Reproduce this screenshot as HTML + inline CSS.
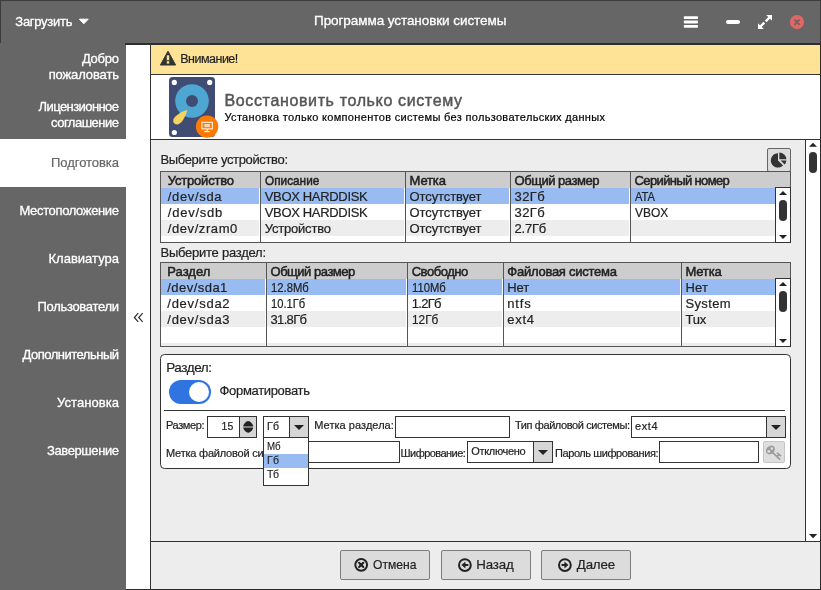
<!DOCTYPE html>
<html lang="ru">
<head>
<meta charset="utf-8">
<title>Программа установки системы</title>
<style>
*{box-sizing:border-box;margin:0;padding:0}
html,body{width:821px;height:590px;overflow:hidden;background:#fff}
body{position:relative;font-family:"Liberation Sans",sans-serif;font-size:13px;color:#222}
.a{position:absolute}
.t{position:absolute;white-space:pre;display:block}
.L{position:absolute;left:0;top:0;width:821px;height:590px;will-change:transform}
.dk{background:#333}
.inp{position:absolute;background:#fff;border:1px solid #333}
.cbtn{position:absolute;background:#d6d6d6;border-left:1px solid #333}
.btn{position:absolute;background:#dcdcdc;border:1px solid #7d7d7d;border-radius:2px}
svg{position:absolute;display:block;overflow:visible}
</style>
</head>
<body>
<!-- title bar -->
<div class="a" style="left:0;top:0;width:821px;height:43px;background:#666;border-top:1px solid #3c3c3c;border-left:1px solid #3c3c3c;border-right:1px solid #3c3c3c"></div>
<!-- sidebar -->
<div class="a" style="left:0;top:43px;width:126px;height:547px;background:#666"></div>
<div class="a" style="left:0;top:139px;width:126px;height:48px;background:#fff"></div>
<!-- frame lines -->
<div class="a dk" style="left:125px;top:43px;width:696px;height:2px;background:#2e2e2e"></div>
<div class="a dk" style="left:150px;top:44px;width:1px;height:546px"></div>
<div class="a dk" style="left:820px;top:44px;width:1px;height:546px;background:#2b2b2b"></div>
<div class="a dk" style="left:126px;top:589px;width:695px;height:1px;background:#2b2b2b"></div>
<!-- warning banner -->
<div class="a" style="left:151px;top:45px;width:669px;height:29px;background:#fee397"></div>
<div class="a dk" style="left:151px;top:74px;width:669px;height:1px"></div>
<svg style="left:160px;top:50px" width="16" height="16" viewBox="0 0 16 16"><path d="M8 1.2 L15.6 15 H0.4 Z" fill="#333" stroke="#333" stroke-width="1" stroke-linejoin="round"/><rect x="6.8" y="5.3" width="2.4" height="5" fill="#fee397"/><rect x="6.8" y="11.3" width="2.4" height="2.3" fill="#fee397"/></svg>
<!-- header -->
<div class="a" style="left:151px;top:75px;width:669px;height:64px;background:#fff"></div>
<div class="a dk" style="left:151px;top:139px;width:669px;height:1px"></div>
<svg style="left:164px;top:74px" width="60" height="66" viewBox="0 0 60 66">
<rect x="5" y="3" width="46" height="60" rx="3.5" fill="#414c74"/>
<circle cx="28" cy="27" r="16.8" fill="#4ea6d3"/>
<circle cx="28" cy="27" r="6" fill="#414c74"/>
<circle cx="10.3" cy="8.4" r="2.6" fill="#fff"/><circle cx="45.7" cy="8.4" r="2.6" fill="#fff"/><circle cx="10.3" cy="58.5" r="2.6" fill="#fff"/>
<path d="M23.4 36 C19.5 36.8 12 40.6 9.7 44.8 C8.2 47.8 10.2 50.8 13.6 50.4 C17.8 49.8 21.8 42 23.4 36 Z" fill="#f5d361"/>
<circle cx="43.1" cy="52.6" r="11.2" fill="#ff7a00"/>
<rect x="37.9" y="48.3" width="10.4" height="6.6" fill="none" stroke="#fff" stroke-width="1"/>
<rect x="40.3" y="50" width="5.6" height="3.2" fill="#ffd9b0"/>
<rect x="42.6" y="55" width="1" height="2" fill="#fff"/><rect x="40.3" y="57" width="5.6" height="1.1" fill="#fff"/>
</svg>
<!-- main scroll area -->
<div class="a" style="left:151px;top:140px;width:654px;height:401px;background:#ededed"></div>
<div class="a dk" style="left:805px;top:140px;width:1px;height:401px"></div>
<div class="a" style="left:806px;top:140px;width:14px;height:401px;background:#fff"></div>
<svg style="left:806px;top:140px" width="14" height="401" viewBox="0 0 14 401"><path d="M3 6.8 L7 2.8 L11 6.8 Z" fill="#222"/><rect x="3" y="12" width="8" height="21" rx="4" fill="#333"/><path d="M3 394.1 L11.2 394.1 L7.1 398.2 Z" fill="#222"/></svg>
<div class="a dk" style="left:151px;top:541px;width:669px;height:1px"></div>
<div class="a" style="left:151px;top:542px;width:669px;height:47px;background:#ededed"></div>
<!-- pie button -->
<div class="a" style="left:767px;top:148px;width:24px;height:24px;background:#dcdcdc;border:1px solid #666;border-radius:2px"></div>
<svg style="left:770px;top:151px" width="18" height="18" viewBox="0 0 18 18"><path d="M8 2.2 A7.2 7.2 0 1 0 13.1 14.5 L8 9.4 Z" fill="#333"/><path d="M9.3 1.4 A7.2 7.2 0 0 1 16.4 8.3 L9.3 8.3 Z" fill="#333"/><path d="M10.6 9.6 L16.4 9.6 A7.2 7.2 0 0 1 14.6 13.6 Z" fill="#333"/></svg>
<!-- table 1 -->
<div class="a" style="left:160px;top:171px;width:631px;height:72px;background:#fff;border:1px solid #555"></div>
<div class="a" style="left:161px;top:172px;width:629px;height:16px;background:#cdcdcd"></div>
<div class="a" style="left:161px;top:188px;width:614px;height:16px;background:#98bbf1"></div>
<div class="a" style="left:161px;top:220px;width:614px;height:16px;background:#ededed"></div>
<div class="a" style="left:259px;top:188px;width:1px;height:54px;background:#fff"></div><div class="a" style="left:404px;top:188px;width:1px;height:54px;background:#fff"></div><div class="a" style="left:509px;top:188px;width:1px;height:54px;background:#fff"></div><div class="a" style="left:629px;top:188px;width:1px;height:54px;background:#fff"></div>
<div class="a" style="left:260px;top:172px;width:1px;height:70px;background:#555"></div>
<div class="a" style="left:405px;top:172px;width:1px;height:70px;background:#555"></div>
<div class="a" style="left:510px;top:172px;width:1px;height:70px;background:#555"></div>
<div class="a" style="left:630px;top:172px;width:1px;height:70px;background:#555"></div>
<div class="a" style="left:775px;top:187px;width:16px;height:56px;background:#fff;border:1px solid #333"></div>
<svg style="left:776px;top:188px" width="14" height="54" viewBox="0 0 14 54"><path d="M3 7 L7 3 L11 7 Z" fill="#222"/><rect x="3" y="12" width="8" height="21" rx="4" fill="#333"/><path d="M3 47 L11 47 L7 51 Z" fill="#222"/></svg>
<!-- table 2 -->
<div class="a" style="left:160px;top:262px;width:631px;height:85px;background:#fff;border:1px solid #555"></div>
<div class="a" style="left:161px;top:263px;width:629px;height:16px;background:#cdcdcd"></div>
<div class="a" style="left:161px;top:279px;width:614px;height:16px;background:#98bbf1"></div>
<div class="a" style="left:161px;top:311px;width:614px;height:16px;background:#ededed"></div>
<div class="a" style="left:161px;top:343px;width:614px;height:3px;background:#ededed"></div>
<div class="a" style="left:265px;top:279px;width:1px;height:67px;background:#fff"></div><div class="a" style="left:406px;top:279px;width:1px;height:67px;background:#fff"></div><div class="a" style="left:502px;top:279px;width:1px;height:67px;background:#fff"></div><div class="a" style="left:680px;top:279px;width:1px;height:67px;background:#fff"></div>
<div class="a" style="left:266px;top:263px;width:1px;height:83px;background:#555"></div>
<div class="a" style="left:407px;top:263px;width:1px;height:83px;background:#555"></div>
<div class="a" style="left:503px;top:263px;width:1px;height:83px;background:#555"></div>
<div class="a" style="left:681px;top:263px;width:1px;height:83px;background:#555"></div>
<div class="a" style="left:775px;top:278px;width:16px;height:69px;background:#fff;border:1px solid #333"></div>
<svg style="left:776px;top:279px" width="14" height="67" viewBox="0 0 14 67"><path d="M3 7 L7 3 L11 7 Z" fill="#222"/><rect x="3" y="12" width="8" height="21" rx="4" fill="#333"/><path d="M3 60 L11 60 L7 64 Z" fill="#222"/></svg>
<!-- group box -->
<div class="a" style="left:160px;top:354px;width:631px;height:115px;background:#fff;border:1px solid #333;border-radius:4.5px"></div>
<div class="a" style="left:169px;top:380px;width:42px;height:24px;background:#2f74e0;border-radius:12px"></div>
<div class="a" style="left:189px;top:382px;width:20px;height:20px;background:#fff;border-radius:10px"></div>
<div class="a dk" style="left:164px;top:410px;width:621px;height:1px"></div>
<!-- row 1 controls -->
<div class="inp" style="left:207px;top:416px;width:50px;height:22px"></div>
<div class="cbtn" style="left:239px;top:417px;width:17px;height:20px"></div>
<svg style="left:240px;top:417px" width="16" height="20" viewBox="0 0 16 20"><path d="M3.2 9.4 C3.4 7.2 6 4.3 8.2 4.1 C10.4 4.3 13 7.2 13.2 9.4 Z" fill="#222"/><path d="M3.2 10.5 C3.4 12.7 6 15.6 8.2 15.8 C10.4 15.6 13 12.7 13.2 10.5 Z" fill="#222"/></svg>
<div class="inp" style="left:263px;top:416px;width:46px;height:22px"></div>
<div class="cbtn" style="left:289px;top:417px;width:19px;height:20px"></div>
<svg style="left:290px;top:417px" width="18" height="20" viewBox="0 0 18 20"><path d="M4 8 L14 8 L9 13 Z" fill="#222"/></svg>
<div class="inp" style="left:395px;top:416px;width:115px;height:22px"></div>
<div class="inp" style="left:631px;top:416px;width:155px;height:22px"></div>
<div class="cbtn" style="left:766px;top:417px;width:19px;height:20px"></div>
<svg style="left:767px;top:417px" width="18" height="20" viewBox="0 0 18 20"><path d="M4 8 L14 8 L9 13 Z" fill="#222"/></svg>
<!-- row 2 controls -->
<div class="inp" style="left:263px;top:441px;width:137px;height:22px"></div>
<div class="inp" style="left:467px;top:441px;width:86px;height:22px"></div>
<div class="cbtn" style="left:533px;top:442px;width:19px;height:20px"></div>
<svg style="left:534px;top:442px" width="18" height="20" viewBox="0 0 18 20"><path d="M4 8 L14 8 L9 13 Z" fill="#222"/></svg>
<div class="inp" style="left:659px;top:441px;width:100px;height:22px"></div>
<div class="a" style="left:763px;top:441px;width:22px;height:22px;background:#dedede;border:1px solid #c6c6c6;border-radius:2px"></div>
<svg style="left:765px;top:443px" width="18" height="18" viewBox="0 0 18 18"><ellipse cx="5.4" cy="7" rx="4.9" ry="3.9" transform="rotate(-42 5.4 7)" fill="#9b9b9b"/><circle cx="3.8" cy="8.4" r="1.45" fill="#dedede"/><circle cx="6.8" cy="5.6" r="1.3" fill="#dedede"/><path d="M8 9.8 L14.6 16.2 M12.4 10.2 L15.4 12.6 M12.2 13.4 L13.9 11.5" fill="none" stroke="#9b9b9b" stroke-width="1.7" stroke-linecap="round"/></svg>
<div class="btn" style="left:340px;top:550px;width:90px;height:30px"></div>
<div class="btn" style="left:441px;top:550px;width:90px;height:30px"></div>
<div class="btn" style="left:541px;top:550px;width:90px;height:30px"></div>
<div class="L">
<span class="t" style="left:15.30px;top:12.80px;font-size:13px;line-height:17px;color:#fff;letter-spacing:-0.270px;-webkit-text-stroke:0.3px #fff;">Загрузить</span>
<span class="t" style="left:314.00px;top:12.32px;font-size:13.5px;line-height:18px;color:#fff;letter-spacing:-0.072px;-webkit-text-stroke:0.3px #fff;">Программа установки системы</span>
<span class="t" style="left:81.90px;top:50.00px;font-size:13px;line-height:17px;color:#fff;letter-spacing:-0.248px;-webkit-text-stroke:0.3px #fff;">Добро</span>
<span class="t" style="left:48.70px;top:66.00px;font-size:13px;line-height:17px;color:#fff;letter-spacing:-0.128px;-webkit-text-stroke:0.3px #fff;">пожаловать</span>
<span class="t" style="left:38.60px;top:98.00px;font-size:13px;line-height:17px;color:#fff;letter-spacing:-0.580px;-webkit-text-stroke:0.3px #fff;">Лицензионное</span>
<span class="t" style="left:51.00px;top:114.00px;font-size:13px;line-height:17px;color:#fff;letter-spacing:-0.498px;-webkit-text-stroke:0.3px #fff;">соглашение</span>
<span class="t" style="left:19.50px;top:202.00px;font-size:13px;line-height:17px;color:#fff;letter-spacing:-0.357px;-webkit-text-stroke:0.3px #fff;">Местоположение</span>
<span class="t" style="left:48.50px;top:250.00px;font-size:13px;line-height:17px;color:#fff;letter-spacing:0.009px;-webkit-text-stroke:0.3px #fff;">Клавиатура</span>
<span class="t" style="left:37.50px;top:298.00px;font-size:13px;line-height:17px;color:#fff;letter-spacing:-0.305px;-webkit-text-stroke:0.3px #fff;">Пользователи</span>
<span class="t" style="left:22.50px;top:346.00px;font-size:13px;line-height:17px;color:#fff;letter-spacing:-0.496px;-webkit-text-stroke:0.3px #fff;">Дополнительный</span>
<span class="t" style="left:57.00px;top:394.00px;font-size:13px;line-height:17px;color:#fff;letter-spacing:0.068px;-webkit-text-stroke:0.3px #fff;">Установка</span>
<span class="t" style="left:47.00px;top:442.00px;font-size:13px;line-height:17px;color:#fff;letter-spacing:-0.405px;-webkit-text-stroke:0.3px #fff;">Завершение</span>
<span class="t" style="left:51.00px;top:154.00px;font-size:13px;line-height:17px;color:#666;letter-spacing:-0.047px;-webkit-text-stroke:0.2px #666;">Подготовка</span>
<span class="t" style="left:180.30px;top:50.87px;font-size:12.5px;line-height:16px;color:#222;letter-spacing:-0.512px;-webkit-text-stroke:0.2px #222;">Внимание!</span>
<span class="t" style="left:224.50px;top:89.76px;font-size:16px;line-height:21px;color:#555;letter-spacing:0.636px;-webkit-text-stroke:0.45px #555;">Восстановить только систему</span>
<span class="t" style="left:224.50px;top:109.99px;font-size:11px;line-height:14px;color:#000;letter-spacing:0.319px;-webkit-text-stroke:0.2px #000;">Установка только компонентов системы без пользовательских данных</span>
<span class="t" style="left:160.50px;top:150.80px;font-size:13px;line-height:17px;color:#222;letter-spacing:-0.357px;-webkit-text-stroke:0.2px #222;">Выберите устройство:</span>
<span class="t" style="left:160.50px;top:244.00px;font-size:13px;line-height:17px;color:#222;letter-spacing:-0.251px;-webkit-text-stroke:0.2px #222;">Выберите раздел:</span>
<span class="t" style="left:167.80px;top:171.60px;font-size:13px;line-height:17px;color:#222;letter-spacing:-0.202px;-webkit-text-stroke:0.5px #222;">Устройство</span>
<span class="t" style="left:264.70px;top:171.60px;font-size:13px;line-height:17px;color:#222;transform:scaleX(0.9076);transform-origin:0 0;-webkit-text-stroke:0.5px #222;">Описание</span>
<span class="t" style="left:409.60px;top:171.60px;font-size:13px;line-height:17px;color:#222;letter-spacing:-0.159px;-webkit-text-stroke:0.5px #222;">Метка</span>
<span class="t" style="left:514.60px;top:171.60px;font-size:13px;line-height:17px;color:#222;letter-spacing:-0.478px;-webkit-text-stroke:0.5px #222;">Общий размер</span>
<span class="t" style="left:634.60px;top:171.60px;font-size:13px;line-height:17px;color:#222;letter-spacing:-0.644px;-webkit-text-stroke:0.5px #222;">Серийный номер</span>
<span class="t" style="left:167.80px;top:187.50px;font-size:13px;line-height:17px;color:#222;letter-spacing:0.663px;-webkit-text-stroke:0.2px #222;">/dev/sda</span>
<span class="t" style="left:264.70px;top:187.50px;font-size:13px;line-height:17px;color:#222;letter-spacing:-0.327px;-webkit-text-stroke:0.2px #222;">VBOX HARDDISK</span>
<span class="t" style="left:409.60px;top:187.50px;font-size:13px;line-height:17px;color:#222;letter-spacing:-0.112px;-webkit-text-stroke:0.2px #222;">Отсутствует</span>
<span class="t" style="left:514.60px;top:187.50px;font-size:13px;line-height:17px;color:#222;letter-spacing:0.382px;-webkit-text-stroke:0.2px #222;">32Гб</span>
<span class="t" style="left:634.70px;top:187.50px;font-size:13px;line-height:17px;color:#222;transform:scaleX(0.8562);transform-origin:0 0;-webkit-text-stroke:0.2px #222;">ATA</span>
<span class="t" style="left:167.80px;top:203.50px;font-size:13px;line-height:17px;color:#222;letter-spacing:0.763px;-webkit-text-stroke:0.2px #222;">/dev/sdb</span>
<span class="t" style="left:264.70px;top:203.50px;font-size:13px;line-height:17px;color:#222;letter-spacing:-0.327px;-webkit-text-stroke:0.2px #222;">VBOX HARDDISK</span>
<span class="t" style="left:409.60px;top:203.50px;font-size:13px;line-height:17px;color:#222;letter-spacing:-0.112px;-webkit-text-stroke:0.2px #222;">Отсутствует</span>
<span class="t" style="left:514.60px;top:203.50px;font-size:13px;line-height:17px;color:#222;letter-spacing:0.382px;-webkit-text-stroke:0.2px #222;">32Гб</span>
<span class="t" style="left:634.70px;top:203.50px;font-size:13px;line-height:17px;color:#222;transform:scaleX(0.9218);transform-origin:0 0;-webkit-text-stroke:0.2px #222;">VBOX</span>
<span class="t" style="left:167.80px;top:219.50px;font-size:13px;line-height:17px;color:#222;letter-spacing:0.576px;-webkit-text-stroke:0.2px #222;">/dev/zram0</span>
<span class="t" style="left:264.70px;top:219.50px;font-size:13px;line-height:17px;color:#222;letter-spacing:-0.191px;-webkit-text-stroke:0.2px #222;">Устройство</span>
<span class="t" style="left:409.60px;top:219.50px;font-size:13px;line-height:17px;color:#222;letter-spacing:-0.112px;-webkit-text-stroke:0.2px #222;">Отсутствует</span>
<span class="t" style="left:514.60px;top:219.50px;font-size:13px;line-height:17px;color:#222;letter-spacing:-0.241px;-webkit-text-stroke:0.2px #222;">2.7Гб</span>
<span class="t" style="left:167.30px;top:262.60px;font-size:13px;line-height:17px;color:#222;letter-spacing:0.006px;-webkit-text-stroke:0.5px #222;">Раздел</span>
<span class="t" style="left:270.50px;top:262.60px;font-size:13px;line-height:17px;color:#222;letter-spacing:-0.478px;-webkit-text-stroke:0.5px #222;">Общий размер</span>
<span class="t" style="left:411.70px;top:262.60px;font-size:13px;line-height:17px;color:#222;letter-spacing:-0.452px;-webkit-text-stroke:0.5px #222;">Свободно</span>
<span class="t" style="left:507.30px;top:262.60px;font-size:13px;line-height:17px;color:#222;letter-spacing:-0.250px;-webkit-text-stroke:0.5px #222;">Файловая система</span>
<span class="t" style="left:685.40px;top:262.60px;font-size:13px;line-height:17px;color:#222;letter-spacing:-0.159px;-webkit-text-stroke:0.5px #222;">Метка</span>
<span class="t" style="left:167.30px;top:278.50px;font-size:13px;line-height:17px;color:#222;letter-spacing:0.453px;-webkit-text-stroke:0.2px #222;">/dev/sda1</span>
<span class="t" style="left:270.50px;top:278.50px;font-size:13px;line-height:17px;color:#222;transform:scaleX(0.8651);transform-origin:0 0;-webkit-text-stroke:0.2px #222;">12.8Мб</span>
<span class="t" style="left:411.70px;top:278.50px;font-size:13px;line-height:17px;color:#222;transform:scaleX(0.8641);transform-origin:0 0;-webkit-text-stroke:0.2px #222;">110Мб</span>
<span class="t" style="left:507.30px;top:278.50px;font-size:13px;line-height:17px;color:#222;letter-spacing:-0.070px;-webkit-text-stroke:0.2px #222;">Нет</span>
<span class="t" style="left:685.40px;top:278.50px;font-size:13px;line-height:17px;color:#222;letter-spacing:0.230px;-webkit-text-stroke:0.2px #222;">Нет</span>
<span class="t" style="left:167.30px;top:294.50px;font-size:13px;line-height:17px;color:#222;letter-spacing:0.741px;-webkit-text-stroke:0.2px #222;">/dev/sda2</span>
<span class="t" style="left:270.50px;top:294.50px;font-size:13px;line-height:17px;color:#222;transform:scaleX(0.8594);transform-origin:0 0;-webkit-text-stroke:0.2px #222;">10.1Гб</span>
<span class="t" style="left:411.70px;top:294.50px;font-size:13px;line-height:17px;color:#222;letter-spacing:-0.691px;-webkit-text-stroke:0.2px #222;">1.2Гб</span>
<span class="t" style="left:507.30px;top:294.50px;font-size:13px;line-height:17px;color:#222;letter-spacing:0.810px;-webkit-text-stroke:0.2px #222;">ntfs</span>
<span class="t" style="left:685.40px;top:294.50px;font-size:13px;line-height:17px;color:#222;letter-spacing:0.391px;-webkit-text-stroke:0.2px #222;">System</span>
<span class="t" style="left:167.30px;top:310.50px;font-size:13px;line-height:17px;color:#222;letter-spacing:0.741px;-webkit-text-stroke:0.2px #222;">/dev/sda3</span>
<span class="t" style="left:270.50px;top:310.50px;font-size:13px;line-height:17px;color:#222;letter-spacing:-0.659px;-webkit-text-stroke:0.2px #222;">31.8Гб</span>
<span class="t" style="left:411.70px;top:310.50px;font-size:13px;line-height:17px;color:#222;transform:scaleX(0.9084);transform-origin:0 0;-webkit-text-stroke:0.2px #222;">12Гб</span>
<span class="t" style="left:507.30px;top:310.50px;font-size:13px;line-height:17px;color:#222;letter-spacing:0.707px;-webkit-text-stroke:0.2px #222;">ext4</span>
<span class="t" style="left:685.40px;top:310.50px;font-size:13px;line-height:17px;color:#222;letter-spacing:-0.152px;-webkit-text-stroke:0.2px #222;">Tux</span>
<span class="t" style="left:166.20px;top:359.22px;font-size:13.5px;line-height:18px;color:#222;letter-spacing:-0.429px;-webkit-text-stroke:0.2px #222;">Раздел:</span>
<span class="t" style="left:219.50px;top:382.00px;font-size:13px;line-height:17px;color:#222;letter-spacing:-0.320px;-webkit-text-stroke:0.2px #222;">Форматировать</span>
<span class="t" style="left:166.00px;top:418.19px;font-size:11px;line-height:14px;color:#222;letter-spacing:-0.396px;-webkit-text-stroke:0.2px #222;">Размер:</span>
<span class="t" style="left:221.60px;top:418.86px;font-size:10.5px;line-height:14px;color:#222;-webkit-text-stroke:0.2px #222;">15</span>
<span class="t" style="left:267.00px;top:418.96px;font-size:10.5px;line-height:14px;color:#222;letter-spacing:0.297px;-webkit-text-stroke:0.2px #222;">Гб</span>
<span class="t" style="left:314.30px;top:418.19px;font-size:11px;line-height:14px;color:#222;letter-spacing:0.040px;-webkit-text-stroke:0.2px #222;">Метка раздела:</span>
<span class="t" style="left:515.00px;top:418.19px;font-size:11px;line-height:14px;color:#222;letter-spacing:-0.405px;-webkit-text-stroke:0.2px #222;">Тип файловой системы:</span>
<span class="t" style="left:635.00px;top:418.69px;font-size:11px;line-height:14px;color:#222;letter-spacing:0.568px;-webkit-text-stroke:0.2px #222;">ext4</span>
<span class="t" style="left:166.00px;top:445.69px;font-size:11px;line-height:14px;color:#222;letter-spacing:-0.206px;-webkit-text-stroke:0.2px #222;">Метка файловой системы:</span>
<span class="t" style="left:400.50px;top:445.69px;font-size:11px;line-height:14px;color:#222;letter-spacing:-0.545px;-webkit-text-stroke:0.2px #222;">Шифрование:</span>
<span class="t" style="left:471.20px;top:444.19px;font-size:11px;line-height:14px;color:#222;letter-spacing:-0.312px;-webkit-text-stroke:0.2px #222;">Отключено</span>
<span class="t" style="left:555.00px;top:445.69px;font-size:11px;line-height:14px;color:#222;letter-spacing:-0.415px;-webkit-text-stroke:0.2px #222;">Пароль шифрования:</span>
<span class="t" style="left:372.50px;top:555.99px;font-size:13.3px;line-height:17px;color:#222;transform:scaleX(0.9116);transform-origin:0 0;-webkit-text-stroke:0.2px #222;">Отмена</span>
<span class="t" style="left:476.30px;top:555.99px;font-size:13.3px;line-height:17px;color:#222;letter-spacing:-0.152px;-webkit-text-stroke:0.2px #222;">Назад</span>
<span class="t" style="left:576.80px;top:555.99px;font-size:13.3px;line-height:17px;color:#222;letter-spacing:-0.163px;-webkit-text-stroke:0.2px #222;">Далее</span>
</div>
<!-- dropdown list -->
<div class="a" style="left:263px;top:437px;width:46px;height:49px;background:#fff;border:1px solid #333"></div>
<div class="a" style="left:264px;top:454px;width:44px;height:14px;background:#98bbf1"></div>
<div class="L">
<span class="t" style="left:267.00px;top:438.96px;font-size:10.5px;line-height:14px;color:#222;transform:scaleX(0.9278);transform-origin:0 0;-webkit-text-stroke:0.12px #222;">Мб</span>
<span class="t" style="left:267.00px;top:452.96px;font-size:10.5px;line-height:14px;color:#222;letter-spacing:0.297px;-webkit-text-stroke:0.12px #222;">Гб</span>
<span class="t" style="left:267.00px;top:466.76px;font-size:10.5px;line-height:14px;color:#222;letter-spacing:-0.438px;-webkit-text-stroke:0.12px #222;">Тб</span>
</div>
<!-- title bar icons -->
<svg style="left:78px;top:17px" width="12" height="8" viewBox="0 0 12 8"><path d="M1.4 2.2 L10.2 2.2 L5.8 6.8 Z" fill="#fff" stroke="#fff" stroke-width="1" stroke-linejoin="round"/></svg>
<svg style="left:683px;top:15px" width="16" height="14" viewBox="0 0 16 14"><rect x="0.8" y="1.2" width="14.2" height="2.8" rx="0.8" fill="#fff"/><rect x="0.8" y="5.6" width="14.2" height="2.8" rx="0.8" fill="#fff"/><rect x="0.8" y="10" width="14.2" height="2.8" rx="0.8" fill="#fff"/></svg>
<div class="a" style="left:726px;top:20px;width:14px;height:4px;background:#fff;border-radius:2px"></div>
<svg style="left:757px;top:14px" width="16" height="16" viewBox="0 0 16 16"><path d="M13 3 L8.7 7.3 M7.3 8.7 L3 13" stroke="#fff" stroke-width="2.4" fill="none"/><path d="M9.2 1 L15 1 L15 6.8 Z" fill="#fff"/><path d="M1 9.2 L1 15 L6.8 15 Z" fill="#fff"/></svg>
<svg style="left:789px;top:14px" width="16" height="16" viewBox="0 0 16 16"><circle cx="8" cy="8.1" r="7.1" fill="#e16666"/><path d="M6 6.1 L10 10.1 M10 6.1 L6 10.1" stroke="#666" stroke-width="2" stroke-linecap="round"/></svg>
<!-- collapse chevrons -->
<svg style="left:133px;top:312px" width="11" height="11" viewBox="0 0 11 11"><path d="M5.2 1.2 L1.4 5.5 L5.2 9.8 M9.6 1.2 L5.8 5.5 L9.6 9.8" fill="none" stroke="#333" stroke-width="1.25"/></svg>
<!-- bottom buttons -->
<svg style="left:353px;top:557px" width="16" height="16" viewBox="0 0 16 16"><circle cx="8.2" cy="7.85" r="5.9" fill="none" stroke="#222" stroke-width="2"/><path d="M6.1 5.8 L10.3 9.9 M10.3 5.8 L6.1 9.9" stroke="#222" stroke-width="2.1" stroke-linecap="round"/><rect x="6.7" y="6.4" width="3" height="2.9" fill="#222"/></svg>
<svg style="left:457px;top:557px" width="16" height="16" viewBox="0 0 16 16"><circle cx="7.9" cy="8.05" r="5.9" fill="none" stroke="#222" stroke-width="2"/><path d="M4.7 8 L8.1 5.2 L8.1 10.8 Z" fill="#222" stroke="#222" stroke-width="0.6" stroke-linejoin="round"/><path d="M8 8 L10.6 8" stroke="#222" stroke-width="1.9" stroke-linecap="round"/></svg>
<svg style="left:557px;top:557px" width="16" height="16" viewBox="0 0 16 16"><circle cx="7.9" cy="8.05" r="5.9" fill="none" stroke="#222" stroke-width="2"/><path d="M11.1 8 L7.7 5.2 L7.7 10.8 Z" fill="#222" stroke="#222" stroke-width="0.6" stroke-linejoin="round"/><path d="M5.2 8 L7.8 8" stroke="#222" stroke-width="1.9" stroke-linecap="round"/></svg>
</body>
</html>
